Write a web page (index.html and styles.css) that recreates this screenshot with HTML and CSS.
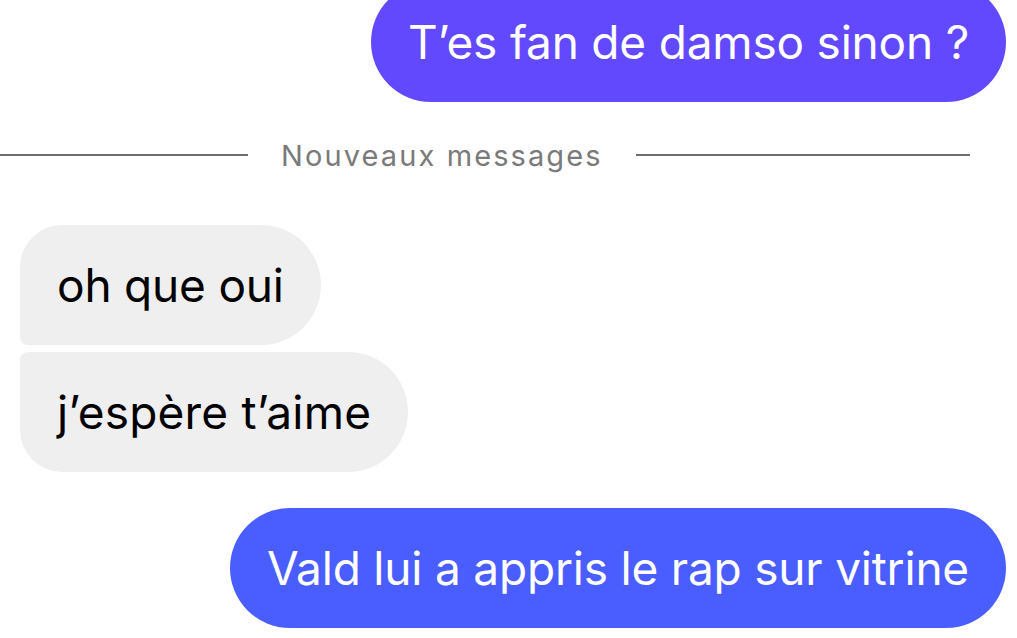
FILE: index.html
```html
<!DOCTYPE html>
<html lang="fr">
<head>
<meta charset="utf-8">
<title>Messages</title>
<link rel="stylesheet" href="styles.css">
</head>
<body>
<main class="thread">
  <div class="row row-out first">
    <div class="bubble out out-top">T’es fan de damso sinon ?</div>
  </div>
  <div class="divider">
    <span class="line"></span>
    <span class="divider-text">Nouveaux messages</span>
    <span class="line"></span>
  </div>
  <div class="group-in">
    <div class="row row-in">
      <div class="bubble in in-first">oh que oui</div>
    </div>
    <div class="row row-in">
      <div class="bubble in in-last">j’espère t’aime</div>
    </div>
  </div>
  <div class="row row-out last">
    <div class="bubble out out-bottom">Vald lui a appris le rap sur vitrine</div>
  </div>
</main>
</body>
</html>
```
FILE: styles.css
```css
html, body {
  margin: 0;
  padding: 0;
  background: #ffffff;
  width: 1017px;
  height: 638px;
  overflow: hidden;
  font-family: Inter, "Noto Sans", "Liberation Sans", sans-serif;
}

.thread {
  display: flex;
  flex-direction: column;
}

.row {
  display: flex;
}

.row-out {
  justify-content: flex-end;
  padding-right: 11px;
}

.row-in {
  justify-content: flex-start;
  padding-left: 20px;
}

.first {
  margin-top: -18px;
}

.bubble {
  box-sizing: border-box;
  height: 120px;
  display: flex;
  align-items: center;
  padding: 0 37px;
  font-size: 46px;
  white-space: nowrap;
  letter-spacing: -0.2px;
}

.out {
  color: #ffffff;
  border-radius: 60px;
}

.out-top {
  background: #6249fe;
}

.out-bottom {
  background: #4a5dfe;
}

.in {
  background: #efefef;
  color: #000000;
}

.in-first {
  border-radius: 42px 60px 60px 8px;
}

.in-last {
  border-radius: 8px 60px 60px 42px;
  letter-spacing: 0.2px;
}

.group-in {
  display: flex;
  flex-direction: column;
  gap: 7px;
  margin-top: 50px;
}

.divider {
  display: grid;
  grid-template-columns: 248px auto 1fr;
  align-items: center;
  column-gap: 33px;
  padding-right: 47px;
  margin-top: 33px;
  height: 40px;
}

.line {
  height: 2px;
  background: #6e6e6e;
}

.divider-text {
  font-size: 29px;
  color: #7a7a7a;
  letter-spacing: 2.1px;
}

.last {
  margin-top: 36px;
}
```
